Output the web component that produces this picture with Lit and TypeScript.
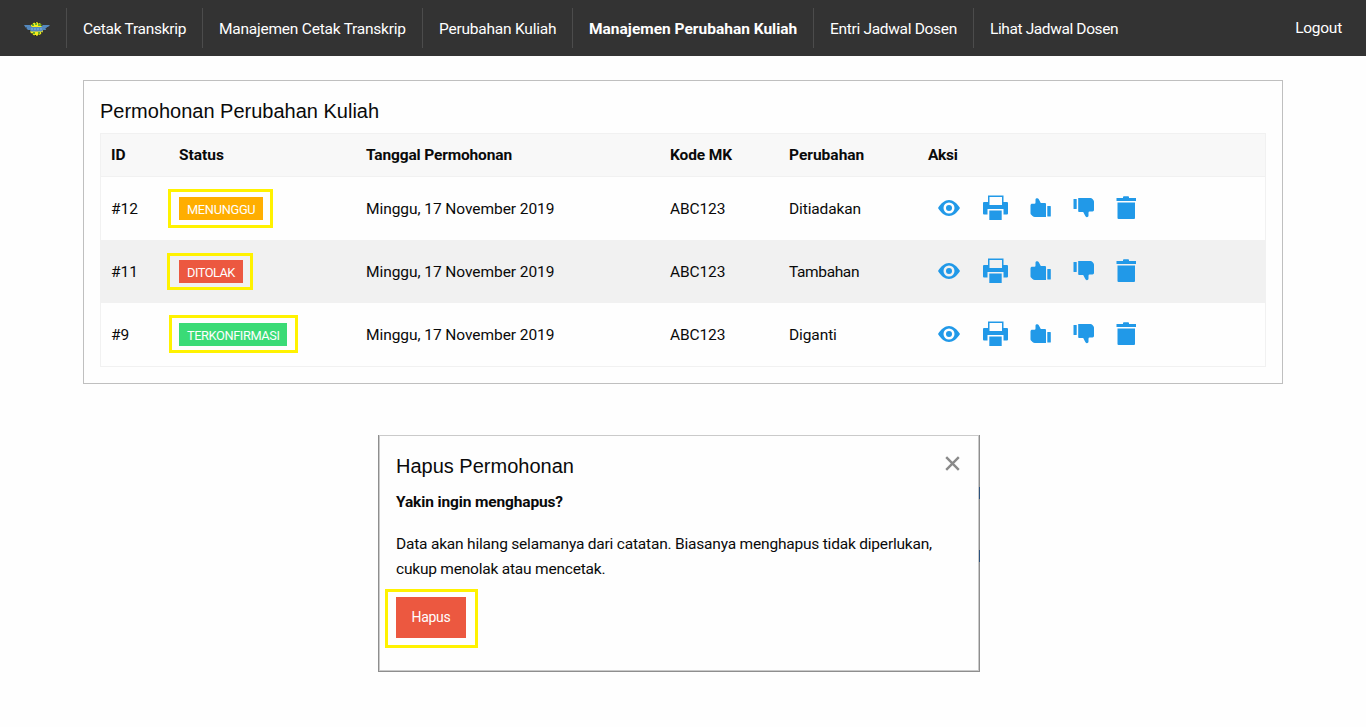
import { LitElement, html, css, svg } from "lit";
import { customElement, property } from "lit/decorators.js";

const icons: Record<string, { w: number; body: unknown }> = {
  eye: {
    w: 22,
    body: svg`<path fill-rule="evenodd" d="M0 13C3 8 7 5 11 5S19 8 22 13C19 18 15 21 11 21S3 18 0 13ZM11 7.500A5.500 5.500 0 1 0 11 18.500A5.500 5.500 0 1 0 11 7.500Z"/><circle cx="11" cy="13" r="3"/>`,
  },
  print: {
    w: 25,
    body: svg`<path fill-rule="evenodd" d="M5 0.500H20.500V7H24Q25 7 25 8V18.500Q25 19.500 24 19.500H20.500V14H4.500V19.500H1Q0 19.500 0 18.500V8Q0 7 1 7H5ZM6.500 2V10H19V2Z"/><path d="M6.300 15.500H18.700V25H6.300Z"/>`,
  },
  up: {
    w: 21,
    body: svg`<path d="M6.500 3.300Q8 2.800 8.800 4.300L10.800 8H15Q16 8 16 9V22H5Q3.500 22 2.500 21L1 19.500Q0.500 19 0.500 18V10.500Q0.500 9.300 1.500 8.700H4.500Q5.500 8.700 5.500 7.500V4.500Q5.500 3.600 6.500 3.300Z"/><rect x="17.300" y="11" width="3.500" height="10.500" rx="0.600"/>`,
  },
  down: {
    w: 21,
    body: svg`<path d="M14.500 22Q13 22.500 12.300 21L10.200 17H6Q5.200 17 5.200 16V3H17.500Q18.500 3 19.500 4L20.500 5.300Q21 6 21 7V15Q21 16.400 19.500 16.500H16.700Q15.500 16.500 15.500 17.700V20.500Q15.500 21.700 14.500 22Z"/><rect x="0.500" y="4" width="3.200" height="10" rx="0.600"/>`,
  },
  trash: {
    w: 20,
    body: svg`<path d="M7 3V2Q7 1.200 8 1.200H12Q13 1.200 13 2V3H20V6H0.500V3Z"/><path d="M1.500 7.500H19V23Q19 24 18 24H2.500Q1.500 24 1.500 23Z"/>`,
  },
};

@customElement("action-icon")
export class ActionIcon extends LitElement {
  @property() name = "eye";
  static styles = css`
    :host { display: block; height: 26px; }
    svg { display: block; fill: #2199e8; }
  `;
  render() {
    const i = icons[this.name];
    return html`<svg width=${i.w} height="26" viewBox="0 0 ${i.w} 26">${i.body}</svg>`;
  }
}

const rows = [
  { id: "#12", status: "MENUNGGU", kind: "wait", change: "Ditiadakan", c: "c1" },
  { id: "#11", status: "DITOLAK", kind: "deny", change: "Tambahan", c: "c2" },
  { id: "#9", status: "TERKONFIRMASI", kind: "ok", change: "Diganti", c: "c3" },
];

@customElement("app-root")
export class AppRoot extends LitElement {
  static styles = css`
    :host {
      display: block;
      height: 727px;
      overflow: hidden;
      background: #fefefe;
      color: #0a0a0a;
      font: 15.5px/24px Roboto, "Open Sans", sans-serif;
    }
    * { box-sizing: border-box; }
    nav {
      display: flex;
      align-items: center;
      height: 56px;
      background: #333;
      color: #fff;
      white-space: nowrap;
    }
    .logo { width: 66px; height: 40px; padding: 13px 0 0 24px; }
    .logo svg { display: block; }
    .item { height: 40px; padding: 9px 0 0 16px; border-left: 1px solid #4c4c4c; line-height: 24px; }
    .n1 { width: 136px; letter-spacing: -0.28px; }
    .n2 { width: 220px; letter-spacing: -0.23px; }
    .n3 { width: 150px; letter-spacing: -0.22px; }
    .n4 { width: 241px; font-weight: 700; }
    .n5 { width: 160px; letter-spacing: -0.31px; }
    .n6 { width: 160px; letter-spacing: -0.39px; }
    .logout { margin: -1px 24px 0 auto; letter-spacing: -0.25px; }
    .card {
      width: 1200px;
      height: 304px;
      margin: 24px 0 0 83px;
      padding: 16px;
      border: 1px solid #bfbfbf;
    }
    h1 {
      margin: 0;
      font: 400 20px/28px "Liberation Sans", Arial, sans-serif;
    }
    .card h1 { height: 36px; }
    .table { border: 1px solid #f1f1f1; }
    .row {
      display: grid;
      grid-template-columns: 68px 187px 304px 119px 139px 1fr;
      align-items: center;
      height: 63px;
      white-space: nowrap;
    }
    .row > * { padding-left: 10px; }
    .row.even { background: #f1f1f1; }
    .row.head { height: 43px; background: #f8f8f8; border-bottom: 1px solid #f1f1f1; font-weight: 700; }
    .h3 { letter-spacing: -0.15px; }
    .h4 { letter-spacing: -0.12px; }
    .h6 { letter-spacing: -0.3px; }
    .date { letter-spacing: -0.06px; }
    .code { letter-spacing: -0.12px; }
    .c1 { letter-spacing: -0.12px; }
    .c2 { letter-spacing: -0.37px; }
    .c3 { letter-spacing: -0.1px; }
    .badge {
      position: relative;
      display: block;
      height: 23px;
      padding-left: 8px;
      font-size: 12.800px;
      line-height: 25px;
      color: #fefefe;
    }
    .wait { width: 84px; background: #ffae00; letter-spacing: -0.3px; }
    .deny { width: 64px; background: #ec5840; letter-spacing: -0.5px; }
    .ok { width: 108px; background: #3adb76; letter-spacing: -0.4px; }
    .mark { position: absolute; border: 3px solid #fff200; }
    .wait .mark { left: -11px; top: -8px; width: 105px; height: 39px; }
    .deny .mark { left: -12px; top: -7px; width: 86px; height: 37px; }
    .ok .mark { left: -10px; top: -8px; width: 129px; height: 38px; }
    .row > .actions { display: flex; padding: 0 0 1px 20px; }
    .actions action-icon { margin-right: 22px; }
    .actions action-icon:first-child { margin-right: 23px; }
    .modal {
      width: 602px;
      height: 237px;
      margin: 51px 0 0 378px;
      border: solid #8e8e8e;
      border-width: 0 1px 1px;
      position: relative;
    }
    .tick { position: absolute; right: -1px; width: 1px; height: 12px; background: #2d527c; }
    .t1 { top: 52px; }
    .t2 { top: 115px; }
    .inner { height: 236px; padding: 16px; border: 1px solid #cacaca; }
    .bar { display: flex; justify-content: space-between; height: 36px; }
    .close { display: block; margin: 4px 2px 0 0; }
    p { margin: 0; white-space: nowrap; line-height: 25px; }
    .ask { padding-top: 2px; font-weight: 700; line-height: 24px; letter-spacing: -0.14px; }
    .info { margin-top: 18px; }
    .l1 { letter-spacing: -0.2px; }
    .l2 { letter-spacing: -0.21px; }
    .hapus {
      display: block;
      position: relative;
      width: 70px;
      height: 41px;
      margin: 15px 0 0;
      padding: 0;
      border: 0;
      background: #ec5840;
      color: #fefefe;
      font: 14px/41px Roboto, "Open Sans", sans-serif;
      letter-spacing: -0.3px;
      text-align: center;
    }
    .hapus .mark { left: -11px; top: -8px; width: 93px; height: 59px; }
  `;

  render() {
    return html`
      <nav>
        <div class="logo">
          <svg width="26" height="16" viewBox="0 0 26 16">
            <circle cx="12.500" cy="8" r="6.800" fill="#f5ed1c"/>
            <circle cx="12.500" cy="8" r="6.500" fill="none" stroke="#151d18" stroke-width="1.200" stroke-dasharray="1.300 2.200"/>
            <path d="M8 4h2M11 3h2M14 4h3M9 12h2M14 12h2" stroke="#3a9a32" stroke-width="1.400"/>
            <path d="M0 4H6L8 6H17L19 4H26L24 6H22.500L23 7H21.500L22 9H19L18 10.500H7L6 9H3L4 8H2.500L3 6.500H1.500Z" fill="#5488bd"/>
            <path d="M7 8h11" stroke="#72a5d6" stroke-width="1.500" stroke-dasharray="2 1"/>
          </svg>
        </div>
        <div class="item n1">Cetak Transkrip</div>
        <div class="item n2">Manajemen Cetak Transkrip</div>
        <div class="item n3">Perubahan Kuliah</div>
        <div class="item n4">Manajemen Perubahan Kuliah</div>
        <div class="item n5">Entri Jadwal Dosen</div>
        <div class="item n6">Lihat Jadwal Dosen</div>
        <div class="logout">Logout</div>
      </nav>
      <section class="card">
        <h1>Permohonan Perubahan Kuliah</h1>
        <div class="table">
          <div class="row head">
            <div>ID</div><div>Status</div><div class="h3">Tanggal Permohonan</div>
            <div class="h4">Kode MK</div><div>Perubahan</div><div class="h6">Aksi</div>
          </div>
          ${rows.map(
            (r, i) => html`<div class="row ${i % 2 ? "even" : ""}">
              <div>${r.id}</div>
              <div><span class="badge ${r.kind}">${r.status}<i class="mark"></i></span></div>
              <div class="date">Minggu, 17 November 2019</div>
              <div class="code">ABC123</div>
              <div class=${r.c}>${r.change}</div>
              <div class="actions">
                ${["eye", "print", "up", "down", "trash"].map((n) => html`<action-icon name=${n}></action-icon>`)}
              </div>
            </div>`
          )}
        </div>
      </section>
      <section class="modal">
        <i class="tick t1"></i><i class="tick t2"></i>
        <div class="inner">
          <div class="bar">
            <h1>Hapus Permohonan</h1>
            <svg class="close" width="15" height="15" viewBox="0 0 15 15" stroke="#8a8a8a" stroke-width="2.400"><path d="M1.200 1.200L13.800 13.800M13.800 1.200L1.200 13.800"/></svg>
          </div>
          <p class="ask">Yakin ingin menghapus?</p>
          <p class="info"><span class="l1">Data akan hilang selamanya dari catatan. Biasanya menghapus tidak diperlukan,</span><br><span class="l2">cukup menolak atau mencetak.</span></p>
          <button class="hapus">Hapus<i class="mark"></i></button>
        </div>
      </section>
    `;
  }
}
